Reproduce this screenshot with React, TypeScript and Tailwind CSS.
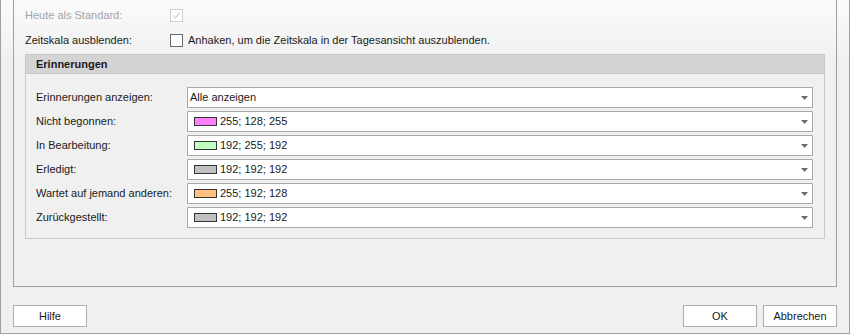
import React from 'react';

type ColorRow = {
  label: string;
  value: string;
  swatch?: string;
};

const rows: ColorRow[] = [
  { label: 'Erinnerungen anzeigen:', value: 'Alle anzeigen' },
  { label: 'Nicht begonnen:', value: '255; 128; 255', swatch: 'bg-[#ff80ff]' },
  { label: 'In Bearbeitung:', value: '192; 255; 192', swatch: 'bg-[#c0ffc0]' },
  { label: 'Erledigt:', value: '192; 192; 192', swatch: 'bg-[#c0c0c0]' },
  { label: 'Wartet auf jemand anderen:', value: '255; 192; 128', swatch: 'bg-[#ffc080]' },
  { label: 'Zurückgestellt:', value: '192; 192; 192', swatch: 'bg-[#c0c0c0]' }
];

function Checkbox({ checked = false, disabled = false }: { checked?: boolean; disabled?: boolean }) {
  return (
    <span
      className={`flex h-[13px] w-[13px] items-center justify-center border bg-white ${
        disabled ? 'border-[#cfcfcf]' : 'border-[#6b6b6b]'
      }`}
    >
      {checked ? (
        <svg width="9" height="9" viewBox="0 0 9 9" fill="none">
          <path d="M1.5 4.8 L3.6 6.8 L7.6 1.8" stroke={disabled ? '#b5b5b5' : '#333'} strokeWidth="1" />
        </svg>
      ) : null}
    </span>
  );
}

function ComboBox({ value, swatch }: { value: string; swatch?: string }) {
  return (
    <div className="flex h-[21px] flex-1 items-center border border-[#a9a9a9] bg-white pl-[2px] pr-[3px]">
      {swatch ? <span className={`ml-[4px] mr-[3px] h-[9px] w-[23px] border border-[#333] ${swatch}`} /> : null}
      <span className="flex-1 whitespace-nowrap">{value}</span>
      <svg width="7" height="4" viewBox="0 0 7 4" className="mr-[1px]">
        <path d="M0 0 H7 L3.5 4 Z" fill="#6e6e6e" />
      </svg>
    </div>
  );
}

function DialogButton({ children }: { children: React.ReactNode }) {
  return (
    <button className="flex h-[22px] w-[74px] items-center justify-center border border-[#adadad] bg-white text-[#1a1a1a]">
      {children}
    </button>
  );
}

export default function App() {
  return (
    <div
      className="flex h-[334px] w-[850px] flex-col border-x border-b border-[#a0a0a0] bg-gradient-to-b from-[#fbfbfb] from-0% to-[#f0f0f0] to-[18%] text-[11px] text-[#1a1a1a]"
      style={{ fontFamily: '"Liberation Sans", Arial, sans-serif' }}
    >
      <div className="mx-[12px] flex h-[287px] flex-col border-x border-b border-[#a0a0a0] px-[11px] pt-[3px]">
        <div className="flex h-[25px] items-center">
          <span className="w-[145px] whitespace-nowrap text-[#a3a3a3]">Heute als Standard:</span>
          <Checkbox checked disabled />
        </div>
        <div className="flex h-[25px] items-center">
          <span className="w-[145px] whitespace-nowrap">Zeitskala ausblenden:</span>
          <Checkbox />
          <span className="ml-[5px] whitespace-nowrap">Anhaken, um die Zeitskala in der Tagesansicht auszublenden.</span>
        </div>

        <section className="mt-[1px] border border-[#c8c8c8]">
          <div className="flex h-[19px] items-center border-b border-[#c8c8c8] bg-[#d4d4d4] px-[10px] font-bold">
            Erinnerungen
          </div>
          <div className="flex flex-col gap-[3px] pl-[10px] pr-[11px] pb-[10px] pt-[13px]">
            {rows.map((row) => (
              <div key={row.label} className="flex items-center">
                <span className="w-[151px] whitespace-nowrap">{row.label}</span>
                <ComboBox value={row.value} swatch={row.swatch} />
              </div>
            ))}
          </div>
        </section>
      </div>

      <div className="mx-[12px] mt-[18px] flex items-center">
        <DialogButton>Hilfe</DialogButton>
        <div className="flex-1" />
        <div className="flex gap-[6px]">
          <DialogButton>OK</DialogButton>
          <DialogButton>Abbrechen</DialogButton>
        </div>
      </div>
    </div>
  );
}
